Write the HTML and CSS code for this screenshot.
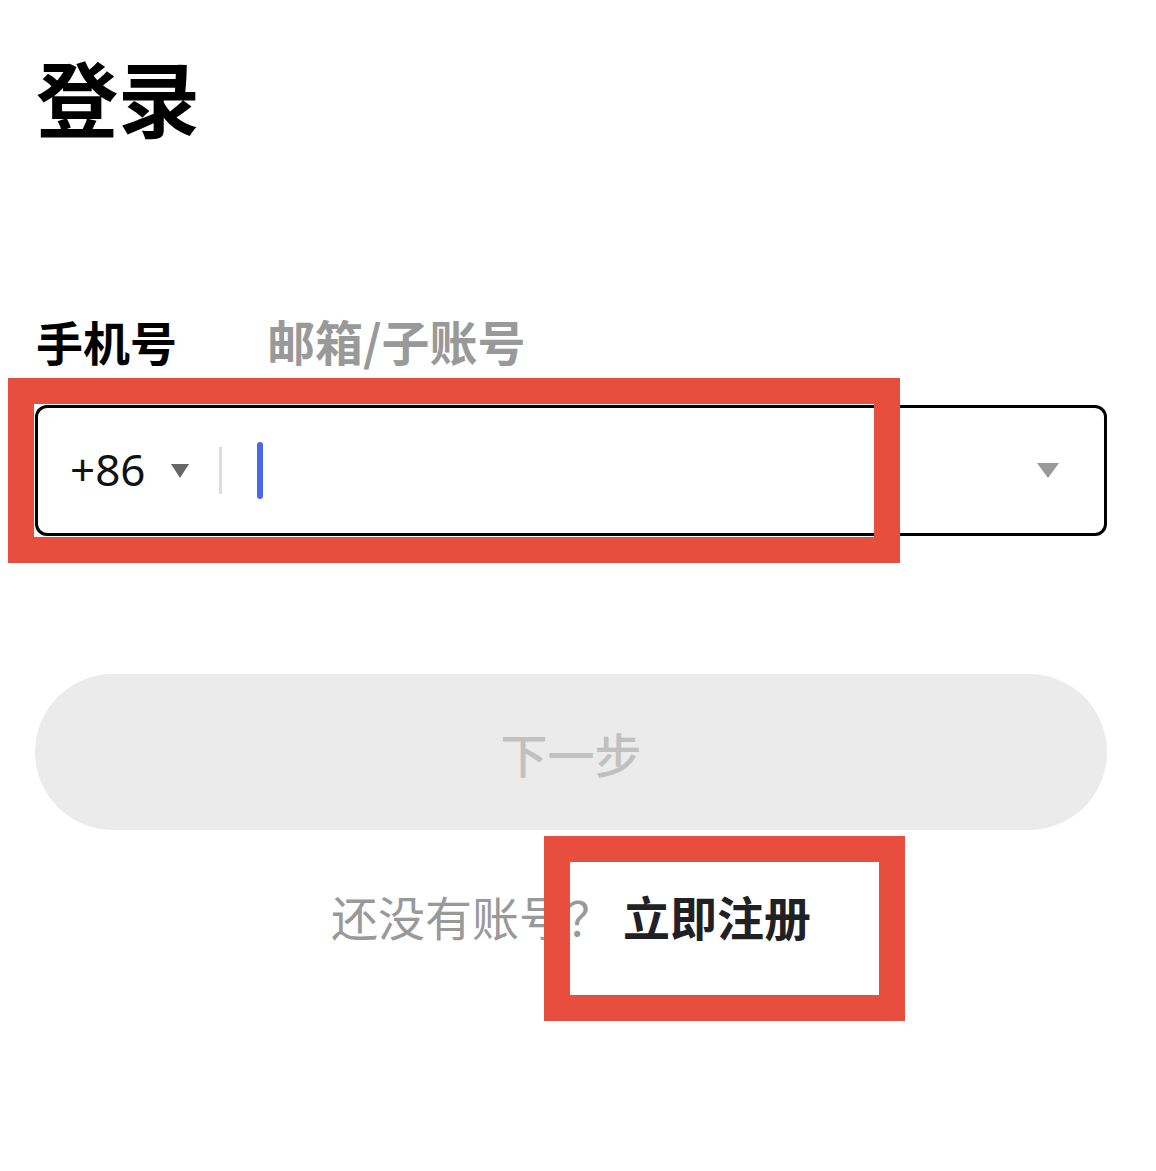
FILE: index.html
```html
<!DOCTYPE html>
<html lang="zh-CN">
<head>
<meta charset="utf-8">
<title>登录</title>
<link rel="stylesheet" href="styles.css">
</head>
<body>
<div class="page">
  <h1 class="title">登录</h1>
  <div class="tabs">
    <span class="tab tab-active">手机号</span>
    <span class="tab tab-muted">邮箱/子账号</span>
  </div>
  <div class="field">
    <span class="code">+86</span>
    <svg class="code-caret" width="18" height="14" viewBox="0 0 18 14"><path d="M0 0H18L9 14Z" fill="#666"/></svg>
    <span class="sep"></span>
    <span class="cursor"></span>
    <span class="grow"></span>
    <svg class="drop-caret" width="22" height="15" viewBox="0 0 22 15"><path d="M0 0H22L11 15Z" fill="#999"/></svg>
  </div>
  <button class="next" type="button">下一步</button>
  <p class="signup"><span class="signup-q">还没有账号？</span><a class="signup-link">立即注册</a></p>

  <div class="mark mark-field"></div>
  <div class="mark mark-signup"></div>
</div>
</body>
</html>
```
FILE: styles.css
```css
html, body {
  margin: 0;
  padding: 0;
  background: #fff;
}
body {
  font-family: "Noto Sans CJK SC", "Noto Sans", sans-serif;
  color: #000;
}
.page {
  position: relative;
  padding: 55px 49px 0 35px;
  height: 1116px;
}
.title {
  margin: 0 0 0 1px;
  font-size: 82px;
  line-height: 82px;
  font-weight: 700;
  color: #000;
}
.tabs {
  margin-top: 180px;
  display: flex;
  align-items: center;
  gap: 90px;
  line-height: 47px;
}
.tab {
  font-size: 47px;
  font-weight: 700;
}
.tab-active {
  color: #000;
  margin-left: 1px;
}
.tab-muted {
  color: #999;
  font-size: 48px;
}
.field {
  margin-top: 41px;
  height: 125px;
  border: 3px solid #000;
  border-radius: 12px;
  display: flex;
  align-items: center;
  padding: 0 45px 0 32px;
}
.code {
  font-size: 44px;
  line-height: 1;
  color: #111;
  font-family: "Noto Sans", "Noto Sans CJK SC", sans-serif;
  margin-bottom: 4px;
}
.code-caret {
  margin-left: 25px;
  display: block;
}
.sep {
  width: 3px;
  height: 47px;
  background: #ddd;
  margin-left: 30px;
}
.cursor {
  width: 6px;
  height: 57px;
  border-radius: 3px;
  background: #4a68e8;
  margin-left: 35px;
}
.grow {
  flex: 1;
}
.drop-caret {
  display: block;
}
.next {
  display: block;
  width: 100%;
  margin-top: 138px;
  height: 156px;
  border: none;
  border-radius: 78px;
  background: #ebebeb;
  color: #c0c0c0;
  font-family: "Noto Sans CJK SC", sans-serif;
  font-size: 47px;
  font-weight: 500;
  padding: 0;
}
.signup {
  margin: 62px 0 0;
  text-align: center;
  font-size: 47px;
  line-height: 47px;
}
.signup-q {
  color: #999;
}
.signup-link {
  color: #1f2124;
  font-weight: 700;
  margin-left: 10px;
}
.mark {
  position: absolute;
  border: 26px solid #e84e3d;
  box-sizing: border-box;
}
.mark-field {
  left: 8px;
  top: 378px;
  width: 892px;
  height: 185px;
}
.mark-signup {
  left: 544px;
  top: 836px;
  width: 361px;
  height: 185px;
}
```
